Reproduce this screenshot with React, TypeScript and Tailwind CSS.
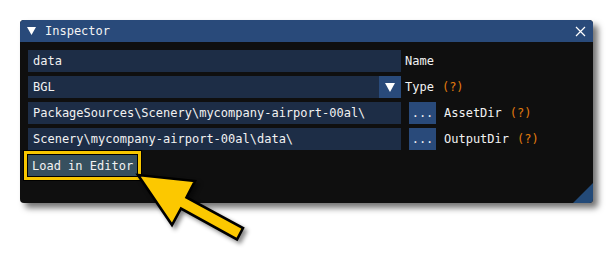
import React from "react";

const mono = { fontFamily: '"DejaVu Sans Mono", "Liberation Mono", monospace' };

function Field({ value, arrow }: { value: string; arrow?: boolean }) {
  return (
    <div className="flex h-[22px] w-[373px] items-center bg-[#1d2d46]">
      <span className="flex-1 truncate pl-[5px] text-[12px] text-[#f2f2f2]">{value}</span>
      {arrow && (
        <span className="flex h-full w-[22px] items-center justify-center bg-[#294a7a]">
          <svg width="10" height="9" viewBox="0 0 10 9">
            <path d="M0 0 L10 0 L5 9 Z" fill="#fff" />
          </svg>
        </span>
      )}
    </div>
  );
}

function Help() {
  return <span className="ml-[8px] text-[#e27c0e]">(?)</span>;
}

export default function App() {
  return (
    <div className="relative h-[263px] w-[614px] overflow-hidden bg-white" style={mono}>
      <div className="pl-[20px] pt-[20px]">
        <div className="relative flex h-[183px] w-[573px] flex-col overflow-hidden rounded-[4px] bg-[#0f0f0f] shadow-[5px_5px_6px_rgba(0,0,0,0.55)]">
          <div className="flex h-[22px] items-center bg-[#294a7a] pl-[7px] pr-[6px]">
            <svg width="9" height="8" viewBox="0 0 9 8">
              <path d="M0 0 L9 0 L4.5 8 Z" fill="#fff" />
            </svg>
            <span className="ml-[9px] flex-1 text-[12px] text-[#f4f4f4]">Inspector</span>
            <svg width="11" height="11" viewBox="0 0 11 11" className="mr-[1px]">
              <path d="M1 1 L10 10 M10 1 L1 10" stroke="#fff" strokeWidth="1.2" />
            </svg>
          </div>

          <div className="flex flex-col gap-[4px] p-[8px] text-[12px] text-[#f2f2f2]">
            <div className="flex items-center">
              <Field value="data" />
              <span className="ml-[4px]">Name</span>
            </div>
            <div className="flex items-center">
              <Field value="BGL" arrow />
              <span className="ml-[4px]">Type</span>
              <Help />
            </div>
            <div className="flex items-center">
              <Field value="PackageSources\Scenery\mycompany-airport-00al\" />
              <span className="ml-[8px] flex h-[22px] w-[27px] items-center justify-center bg-[#294a7a]">...</span>
              <span className="ml-[8px]">AssetDir</span>
              <Help />
            </div>
            <div className="flex items-center">
              <Field value="Scenery\mycompany-airport-00al\data\" />
              <span className="ml-[8px] flex h-[22px] w-[27px] items-center justify-center bg-[#294a7a]">...</span>
              <span className="ml-[8px]">OutputDir</span>
              <Help />
            </div>
            <div className="flex">
              <div className="-ml-[5px] -mt-[4px] border border-black bg-[#f7c600] p-[3px]">
                <div className="border border-black">
                  <button className="flex h-[21px] items-center bg-[#37505f] px-[4px] text-[12px] text-[#f2f2f2]">
                    Load in Editor
                  </button>
                </div>
              </div>
            </div>
          </div>

          <svg width="20" height="20" viewBox="0 0 20 20" className="absolute bottom-0 right-0">
            <path d="M20 0 L20 20 L0 20 Z" fill="#234a78" />
          </svg>
        </div>
      </div>

      <svg
        width="614"
        height="263"
        viewBox="0 0 614 263"
        className="pointer-events-none absolute left-0 top-0"
        style={{ filter: "drop-shadow(3px 3px 2px rgba(0,0,0,0.45))" }}
      >
        <path
          d="M138 175 L195 181 L186.5 197.5 L243 228 L237 239.5 L181 208.5 L172 225 Z"
          fill="#fcc800"
          stroke="#000"
          strokeWidth="2.6"
          strokeLinejoin="miter"
        />
      </svg>
    </div>
  );
}
